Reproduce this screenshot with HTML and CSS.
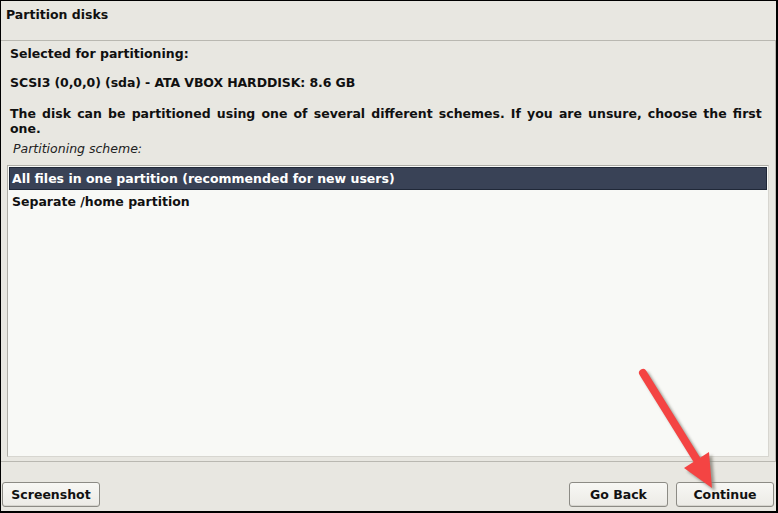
FILE: index.html
```html
<!DOCTYPE html>
<html>
<head>
<meta charset="utf-8">
<link rel="stylesheet" href="styles.css">
</head>
<body>
<div class="window">
  <div class="titlebar">Partition disks</div>
  <div class="frame">
    <p class="label first">Selected for partitioning:</p>
    <p class="label disk">SCSI3 (0,0,0) (sda) - ATA VBOX HARDDISK: 8.6 GB</p>
    <p class="label para">The disk can be partitioned using one of several different schemes. If you are unsure, choose the first one.</p>
    <p class="scheme">Partitioning scheme:</p>
    <div class="listbox">
      <div class="row selected">All files in one partition (recommended for new users)</div>
      <div class="row">Separate /home partition</div>
    </div>
  </div>
  <div class="buttons">
    <button class="btn">Screenshot</button>
    <div class="spacer"></div>
    <button class="btn back">Go Back</button>
    <button class="btn cont">Continue</button>
  </div>
  <svg class="arrow" width="778" height="513" viewBox="0 0 778 513">
    <defs>
      <filter id="sh" x="-20%" y="-20%" width="140%" height="140%">
        <feGaussianBlur stdDeviation="1.5"/>
      </filter>
    </defs>
    <g transform="translate(3,3)" fill="#7d7a70" stroke="#7d7a70" opacity="0.75" filter="url(#sh)">
      <line x1="643" y1="373" x2="697" y2="460" stroke-width="8" stroke-linecap="round"/>
      <polygon points="684,468 709,452 712,488" stroke="none"/>
    </g>
    <g fill="#f44443" stroke="#f44443">
      <line x1="643" y1="373" x2="697" y2="460" stroke-width="8" stroke-linecap="round"/>
      <polygon points="684,468 709,452 712,488" stroke="none"/>
    </g>
  </svg>
</div>
</body>
</html>
```
FILE: styles.css
```css
html, body {
  margin: 0;
  padding: 0;
  background: #e8e7e1;
}
.window {
  position: relative;
  width: 775px;
  height: 510px;
  border-top: 1px solid #000;
  border-left: 1px solid #000;
  border-right: 2px solid #000;
  border-bottom: 2px solid #000;
  background: #e8e7e1;
  font-family: "DejaVu Sans", sans-serif;
  font-weight: bold;
  font-size: 12.5px;
  color: #101010;
  display: flex;
  flex-direction: column;
}
.titlebar {
  height: 39px;
  box-sizing: border-box;
  padding: 6px 0 0 5px;
  line-height: 15px;
}
.frame {
  height: 422px;
  box-sizing: border-box;
  border-top: 1px solid #b9b8b1;
  border-right: 1px solid #b9b8b1;
  border-bottom: 1px solid #b9b8b1;
  padding: 0 6px 0 6px;
  display: flex;
  flex-direction: column;
}
.label {
  margin: 0;
  padding-left: 3px;
  line-height: 15px;
}
.first { margin-top: 5px; }
.label + .label { margin-top: 14px; }
.disk { letter-spacing: -0.1px; }
.para {
  margin-top: 16px !important;
  word-spacing: 1.8px;
  padding-right: 4px;
}
.scheme {
  margin: 5px 0 0 0;
  padding-left: 6px;
  font-weight: normal;
  font-style: italic;
  line-height: 15px;
  color: #222;
}
.listbox {
  margin-top: 9px;
  flex: 1;
  margin-bottom: 4px;
  background: #f8f9f6;
  border: 1px solid #aeada6;
  border-right-color: #d7d6d0;
  border-bottom-color: #d7d6d0;
  padding: 1px;
}
.row {
  height: 23px;
  line-height: 23px;
  padding-left: 3px;
  color: #111;
}
.row.selected {
  background: #394256;
  color: #fff;
  border: 1px solid #202838;
  height: 21px;
  line-height: 21px;
  padding-left: 2px;
}
.buttons {
  display: flex;
  align-items: flex-start;
  padding: 20px 0 0 1px;
}
.spacer { flex: 1; }
.btn {
  font-family: "DejaVu Sans", sans-serif;
  font-weight: bold;
  font-size: 12.5px;
  color: #111;
  height: 25px;
  padding: 0;
  border: 1px solid #8c8b85;
  border-radius: 3px;
  background: linear-gradient(#f7f7f4, #ecebe6);
  box-shadow: inset 0 -1px 0 #d6d5cf;
}
.btn:first-child { width: 98px; }
.back { width: 99px; margin-right: 8px; }
.cont { width: 98px; margin-right: 2px; }
.arrow {
  position: absolute;
  left: -1px;
  top: -1px;
  pointer-events: none;
}
```
